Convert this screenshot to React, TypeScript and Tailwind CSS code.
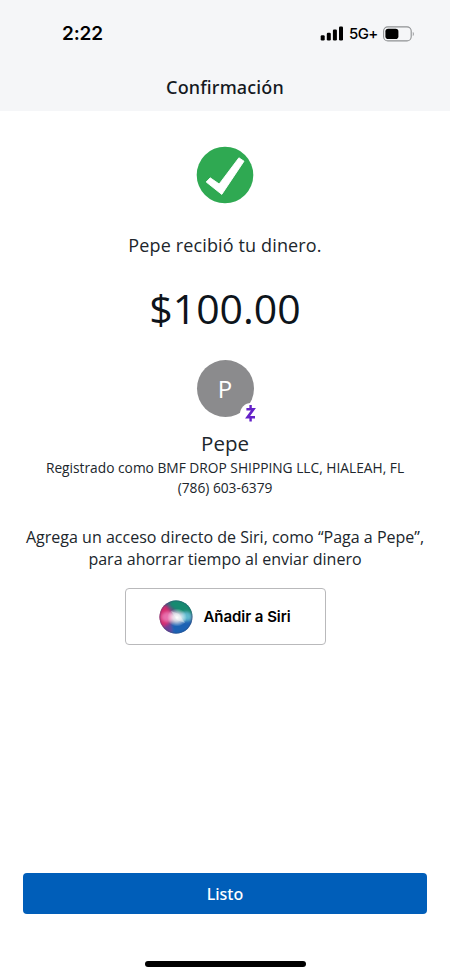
function SignalIcon() {
  return (
    <svg width="24" height="16" viewBox="0 0 24 16" fill="#000">
      <rect x="0.7" y="9.3" width="4" height="5.2" rx="1.2" />
      <rect x="6.8" y="6.8" width="4" height="7.7" rx="1.2" />
      <rect x="12.9" y="3.6" width="4" height="10.9" rx="1.2" />
      <rect x="19" y="0.4" width="4" height="14.1" rx="1.2" />
    </svg>
  );
}

function BatteryIcon() {
  return (
    <svg width="32" height="16" viewBox="0 0 32 16" fill="none">
      <rect x="0.6" y="0.9" width="27.6" height="14" rx="4.2" stroke="#8f9193" strokeWidth="1.1" />
      <rect x="2.4" y="2.7" width="13" height="10.4" rx="2.8" fill="#000" />
      <path d="M29.8 5.9c1.3.4 1.3 3.6 0 4z" fill="#8f9193" />
    </svg>
  );
}

function StatusBar() {
  return (
    <div className="flex h-[67px] items-center justify-between pr-[35px] pl-[62px] font-['Inter',sans-serif] text-black">
      <span className="text-[19px] leading-6 font-semibold tracking-[-0.15px]">2:22</span>
      <div className="flex items-center">
        <SignalIcon />
        <span className="ml-[5px] w-7 text-[15px] leading-6 font-medium tracking-[-0.6px]">5G+</span>
        <span className="ml-1.5">
          <BatteryIcon />
        </span>
      </div>
    </div>
  );
}

function CheckCircle() {
  return (
    <svg width="58" height="58" viewBox="0 0 58 58">
      <circle cx="29" cy="29" r="28.3" fill="#2fa952" />
      <path
        d="M10.2 36L14.2 31.8L23.2 38L42.9 11.8L48 15.2L25.8 48.4z"
        fill="#fff"
        stroke="#fff"
        strokeWidth="0.9"
        strokeLinejoin="round"
      />
    </svg>
  );
}

function ZelleMark() {
  return (
    <svg width="22" height="22" viewBox="0 0 22 22">
      <circle cx="11" cy="11" r="11" fill="#fff" />
      <g fill="none" stroke="#6421c8" strokeWidth="2.6">
        <path d="M6.4 6.2H13.4L7.6 14.2H15" />
        <path d="M10.6 1.9v4M10.6 14.5v4.1" strokeWidth="2.4" />
      </g>
    </svg>
  );
}

function SiriOrb() {
  return (
    <svg width="34" height="34" viewBox="0 0 34 34">
      <defs>
        <clipPath id="orb">
          <circle cx="17" cy="17" r="16.5" />
        </clipPath>
        <filter id="soft" x="-50%" y="-50%" width="200%" height="200%">
          <feGaussianBlur stdDeviation="1.7" />
        </filter>
        <radialGradient id="glow">
          <stop offset="0" stopColor="#fff" />
          <stop offset="0.4" stopColor="#fff" stopOpacity="0.75" />
          <stop offset="1" stopColor="#fff" stopOpacity="0" />
        </radialGradient>
      </defs>
      <g clipPath="url(#orb)">
        <rect width="34" height="34" fill="#45517f" />
        <g filter="url(#soft)">
          <path d="M12 -2H36V15L20 13L10 5z" fill="#198a70" />
          <path d="M-2 6L7 5L13 12L10 24L4 28L-2 24z" fill="#d52a70" />
          <ellipse cx="9" cy="17" rx="6.5" ry="5" fill="#e86fae" />
          <ellipse cx="27" cy="17" rx="6" ry="5" fill="#5fb9cf" />
          <path d="M12 23L24 21L34 20L28 36H9z" fill="#1c62b4" />
          <path d="M5 26L12 23L13 34L6 32z" fill="#6d3f98" />
        </g>
        <ellipse cx="18" cy="17.5" rx="10" ry="9" fill="url(#glow)" />
        <path d="M12 11L20 14L26 23L18 20z" fill="#fff" fillOpacity="0.35" />
        <circle cx="17" cy="17" r="16" fill="none" stroke="#314d70" strokeOpacity="0.3" />
      </g>
    </svg>
  );
}

export default function App() {
  return (
    <div className="flex h-[976px] w-[450px] flex-col bg-white font-['Open_Sans',sans-serif] text-[#20262c]">
      <header className="h-[111px] bg-[#f5f6f8]">
        <StatusBar />
        <h1 className="pt-[7px] text-center font-['Noto_Sans',sans-serif] text-[18px] leading-[26px] font-medium tracking-[0.16px] text-[#14191f]">
          Confirmación
        </h1>
      </header>

      <main className="flex flex-1 flex-col items-center text-center">
        <div className="mt-[35px]">
          <CheckCircle />
        </div>
        <p className="mt-[29px] text-[18px] leading-6 tracking-[0.14px] whitespace-nowrap">Pepe recibió tu dinero.</p>
        <p className="mt-[25px] text-[41px] leading-[52px] whitespace-nowrap text-[#0d141b]">$100.00</p>

        <div className="relative mt-[26px] flex h-[57px] w-[57px] items-center justify-center rounded-full bg-[#8b8b8d]">
          <span className="text-[24px] leading-8 text-white">P</span>
          <span className="absolute -right-[8px] -bottom-[8px]">
            <ZelleMark />
          </span>
        </div>

        <h2 className="mt-3 text-[20.5px] leading-7">Pepe</h2>
        <p className="mt-px text-[13.75px] leading-5 whitespace-nowrap">
          Registrado como BMF DROP SHIPPING LLC, HIALEAH, FL
        </p>
        <p className="text-[13.75px] leading-5 whitespace-nowrap">(786) 603-6379</p>

        <p className="mt-7 text-[16.05px] leading-[22px] whitespace-nowrap">
          Agrega un acceso directo de Siri, como “Paga a Pepe”,
          <br />
          para ahorrar tiempo al enviar dinero
        </p>

        <button
          type="button"
          className="mt-[18px] flex h-[57px] w-[201px] items-center rounded-[4px] border border-[#b9b9bb] pl-[33px] font-['Inter',sans-serif] text-black"
        >
          <SiriOrb />
          <span className="ml-[11px] text-[15px] leading-6 font-semibold tracking-[-0.05px] whitespace-nowrap">
            Añadir a Siri
          </span>
        </button>
      </main>

      <footer className="flex flex-col items-center px-[23px] pb-[9px]">
        <button
          type="button"
          className="h-[41px] w-full rounded-[4px] bg-[#005eb9] font-['Noto_Sans',sans-serif] text-[16px] font-medium text-white"
        >
          Listo
        </button>
        <div className="mt-[47px] h-[6px] w-[161px] rounded-full bg-black" />
      </footer>
    </div>
  );
}
